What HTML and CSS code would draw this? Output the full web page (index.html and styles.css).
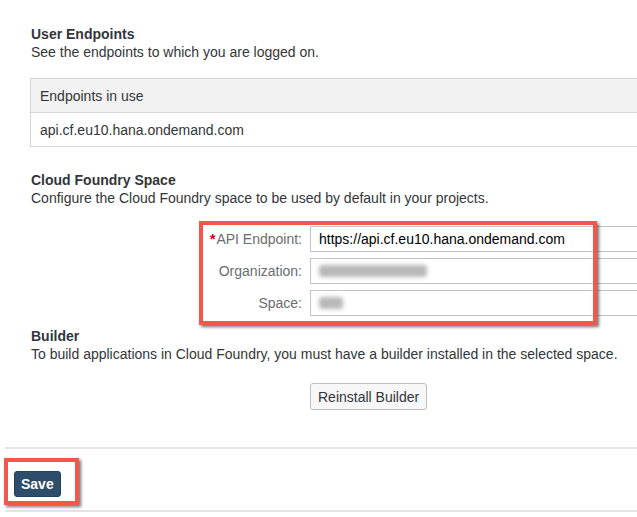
FILE: index.html
```html
<!DOCTYPE html>
<html>
<head>
<meta charset="utf-8">
<link rel="stylesheet" href="styles.css">
</head>
<body>
<div class="page">
  <section class="section first">
    <h2 class="title">User Endpoints</h2>
    <p class="desc">See the endpoints to which you are logged on.</p>
    <div class="table">
      <div class="th">Endpoints in use</div>
      <div class="td">api.cf.eu10.hana.ondemand.com</div>
    </div>
  </section>

  <section class="section cf">
    <h2 class="title">Cloud Foundry Space</h2>
    <p class="desc">Configure the Cloud Foundry space to be used by default in your projects.</p>
    <div class="form">
      <label class="label"><span class="req">*</span>API Endpoint:</label>
      <div class="field">https://api.cf.eu10.hana.ondemand.com</div>
      <label class="label">Organization:</label>
      <div class="field"><span class="blur blur-org"></span></div>
      <label class="label">Space:</label>
      <div class="field"><span class="blur blur-space"></span></div>
    </div>
  </section>

  <section class="section builder">
    <h2 class="title">Builder</h2>
    <p class="desc">To build applications in Cloud Foundry, you must have a builder installed in the selected space.</p>
    <button class="btn">Reinstall Builder</button>
  </section>

  <div class="footer">
    <button class="save">Save</button>
  </div>
</div>
<div class="mark mark-form"></div>
<div class="mark mark-save"></div>
</body>
</html>
```

FILE: styles.css
```css
html, body {
  margin: 0;
  padding: 0;
  overflow: hidden;
  background: #fff;
}
body {
  font-family: "Liberation Sans", Arial, sans-serif;
  font-size: 14px;
  line-height: 18px;
  color: #32363a;
  width: 637px;
  height: 517px;
  position: relative;
}
.page {
  padding: 25px 0 0 5px;
}
.section {
  padding-left: 26px;
}
.title {
  margin: 0;
  font-size: 14px;
  line-height: 18px;
  font-weight: bold;
}
.desc {
  margin: 0;
}
.table {
  margin: 17px 0 0 -1px;
  border: 1px solid #d6d6d6;
  border-right: none;
}
.th {
  background: #f2f2f2;
  padding: 8px 9px 7px;
  border-bottom: 1px solid #d6d6d6;
}
.td {
  padding: 8px 9px 7px;
}
.cf {
  margin-top: 24px;
}
.form {
  margin-top: 19px;
  display: grid;
  grid-template-columns: 271px 1fr;
  column-gap: 8px;
  row-gap: 6px;
  align-items: center;
}
.label {
  text-align: right;
  color: #6a6d70;
}
.req {
  color: #d0021b;
  font-weight: bold;
  margin-right: 1px;
}
.field {
  box-sizing: border-box;
  height: 26px;
  border: 1px solid #c4c4c4;
  border-right: none;
  background: #fff;
  padding: 3px 8px;
  color: #000;
  display: flex;
  align-items: center;
}
.blur {
  display: block;
  height: 12px;
  background: #b8b8b8;
  filter: blur(2px);
  border-radius: 3px;
}
.blur-org { width: 108px; }
.blur-space { width: 24px; }
.builder {
  margin-top: 11px;
}
.btn {
  margin: 20px 0 0 279px;
  height: 27px;
  padding: 0 7px;
  border: 1px solid #bfbfbf;
  border-radius: 3px;
  background: #f7f7f7;
  color: #32363a;
  font-family: "Liberation Sans", Arial, sans-serif;
  font-size: 14px;
}
.footer {
  margin-top: 37px;
  border-top: 2px solid #e4e4e4;
  border-bottom: 2px solid #e4e4e4;
  padding: 22px 0 13px 9px;
}
.save {
  display: block;
  height: 26px;
  padding: 0 6px;
  border: 1px solid #24405c;
  border-radius: 3px;
  background: #2e4d6b;
  color: #fff;
  font-family: "Liberation Sans", Arial, sans-serif;
  font-size: 14px;
  font-weight: bold;
}
.mark {
  position: absolute;
  box-sizing: border-box;
  border: 4px solid #f6554a;
  box-shadow: 2px 2px 3px rgba(0, 0, 0, 0.55);
}
.mark-form {
  left: 199px;
  top: 221px;
  width: 398px;
  height: 104px;
}
.mark-save {
  left: 4px;
  top: 458px;
  width: 75px;
  height: 47px;
}
```
